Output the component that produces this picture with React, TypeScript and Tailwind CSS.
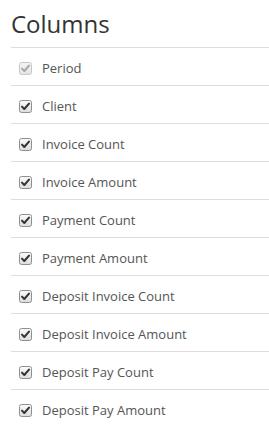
import React from "react";

const COLUMNS = [
  { label: "Period", disabled: true },
  { label: "Client" },
  { label: "Invoice Count" },
  { label: "Invoice Amount" },
  { label: "Payment Count" },
  { label: "Payment Amount" },
  { label: "Deposit Invoice Count" },
  { label: "Deposit Invoice Amount" },
  { label: "Deposit Pay Count" },
  { label: "Deposit Pay Amount" },
];

// Old-style native checkbox look, checked.
function Check({ disabled }: { disabled?: boolean }) {
  const border = disabled ? "#c8c8c8" : "#8f8f8f";
  const mark = disabled ? "#a8a8a8" : "#333";
  return (
    <svg width="13" height="13" viewBox="0 0 13 13" className="flex-none">
      <defs>
        <linearGradient id={disabled ? "cbd" : "cb"} x1="0" y1="0" x2="0" y2="1">
          <stop offset="0" stopColor={disabled ? "#f4f4f4" : "#fcfcfc"} />
          <stop offset="1" stopColor={disabled ? "#e4e4e4" : "#dcdcdc"} />
        </linearGradient>
      </defs>
      <rect x="0.5" y="0.5" width="12" height="12" rx="2" fill={`url(#${disabled ? "cbd" : "cb"})`} stroke={border} />
      <path d="M3 6.6 L5.3 9 L10 3.6" fill="none" stroke={mark} strokeWidth="2" strokeLinecap="round" strokeLinejoin="round" />
    </svg>
  );
}

export default function App() {
  return (
    <div className="h-[431px] w-[269px] bg-white pl-[11px] font-['Open_Sans',sans-serif]">
      <h3 className="pt-[9px] pb-[8px] text-[24px] leading-[30px] text-[#333]">Columns</h3>
      <ul>
        {COLUMNS.map((c) => (
          <li key={c.label} className="flex h-[38px] items-center gap-[10px] border-t border-[#ddd] pl-[8px] pt-[4px]">
            <Check disabled={c.disabled} />
            <span className="text-[13px] text-[#555]">{c.label}</span>
          </li>
        ))}
      </ul>
    </div>
  );
}
